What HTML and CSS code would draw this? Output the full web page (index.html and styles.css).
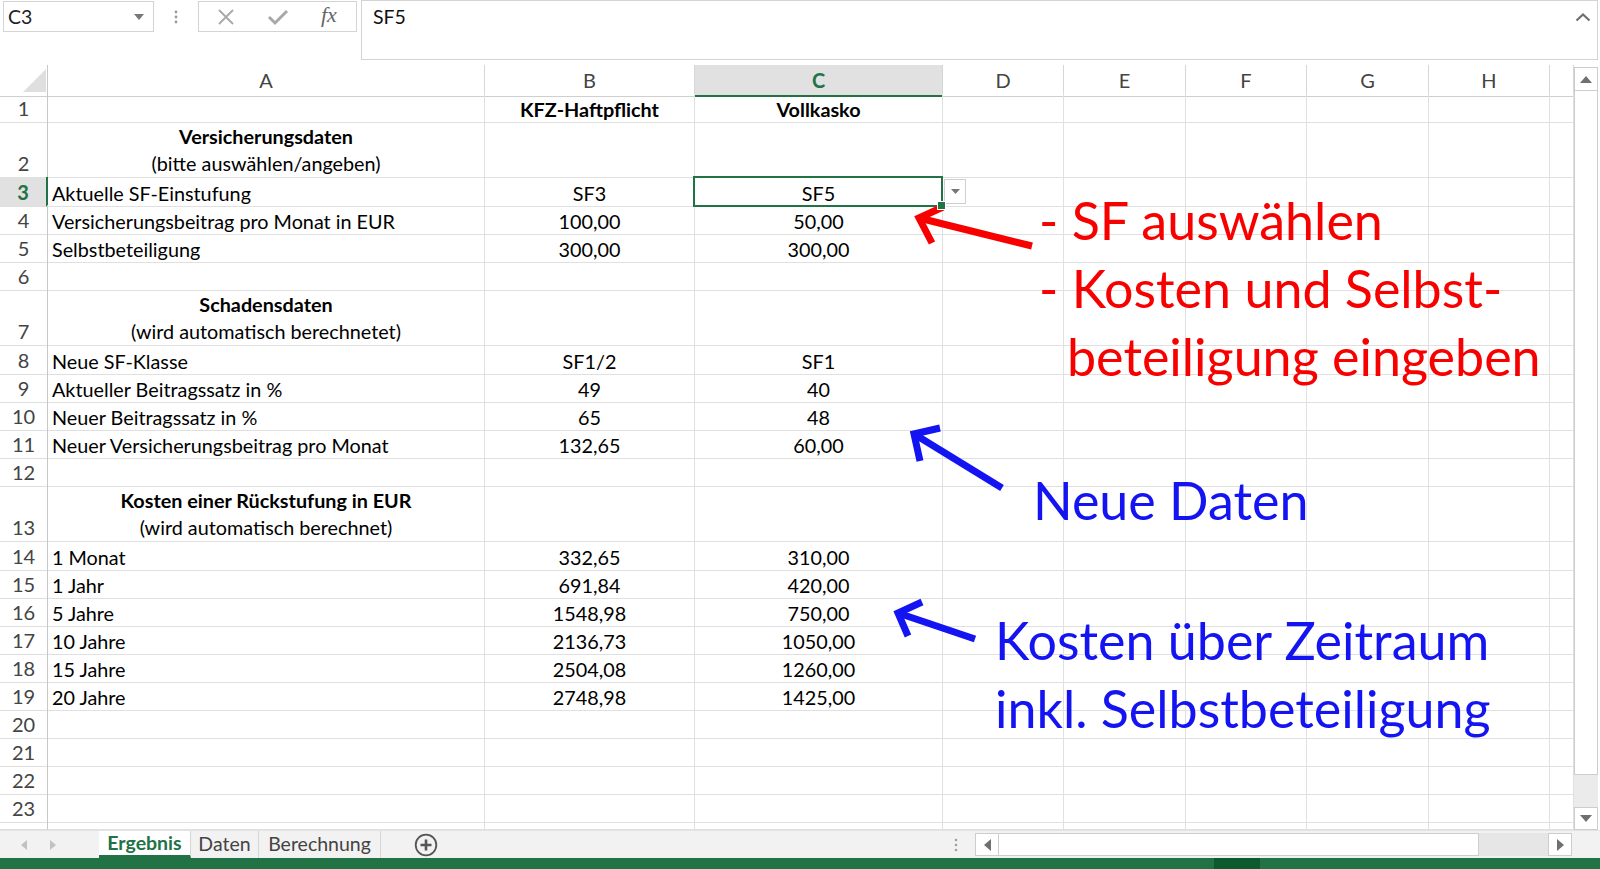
FILE: index.html
```html
<!DOCTYPE html>
<html lang="de">
<head>
<meta charset="utf-8">
<title>Ergebnis</title>
<link rel="stylesheet" href="styles.css">
</head>
<body>
<div class="app">
  <div class="formula-bar">
    <div class="namebox"><span>C3</span><svg width="10" height="6" viewBox="0 0 10 6"><polygon points="0,0 10,0 5,6" fill="#777"/></svg></div>
    <div class="fb-grip"><svg width="4" height="14" viewBox="0 0 4 14"><circle cx="2" cy="2" r="1.4" fill="#9a9a9a"/><circle cx="2" cy="7" r="1.4" fill="#9a9a9a"/><circle cx="2" cy="12" r="1.4" fill="#9a9a9a"/></svg></div>
    <div class="fb-buttons">
      <svg class="fb-x" width="18" height="18" viewBox="0 0 18 18"><path d="M2 2 L16 16 M16 2 L2 16" stroke="#a8a8a8" stroke-width="1.8" fill="none"/></svg>
      <svg class="fb-ok" width="22" height="18" viewBox="0 0 22 18"><path d="M2 9 L8 15 L20 3" stroke="#a8a8a8" stroke-width="3" fill="none"/></svg>
      <span class="fx">fx</span>
    </div>
    <div class="fb-input"><span>SF5</span><svg width="16" height="10" viewBox="0 0 16 10"><path d="M1.5 8.5 L8 2.5 L14.5 8.5" stroke="#707070" stroke-width="2.2" fill="none"/></svg></div>
  </div>

  <div class="sheet">
    <div class="grid">
      <div class="row hdr">
        <div class="corner"><svg width="48" height="28" viewBox="0 0 48 28"><polygon points="46,4 46,27 23,27" fill="#dfdfdf"/></svg></div>
        <div class="ch">A</div><div class="ch">B</div><div class="ch sel">C</div><div class="ch">D</div><div class="ch">E</div><div class="ch">F</div><div class="ch">G</div><div class="ch">H</div><div class="ch"></div>
      </div>
      <div class="row">
        <div class="rh">1</div><div class="c"></div><div class="c tc bold">KFZ-Haftpflicht</div><div class="c tc bold">Vollkasko</div><div class="c"></div><div class="c"></div><div class="c"></div><div class="c"></div><div class="c"></div><div class="c"></div>
      </div>
      <div class="row tall">
        <div class="rh">2</div><div class="c tc wrap"><span class="bold">Versicherungsdaten</span><br>(bitte auswählen/angeben)</div><div class="c"></div><div class="c"></div><div class="c"></div><div class="c"></div><div class="c"></div><div class="c"></div><div class="c"></div><div class="c"></div>
      </div>
      <div class="row">
        <div class="rh rh-sel">3</div><div class="c">Aktuelle SF-Einstufung</div><div class="c tc">SF3</div><div class="c tc cell-active">SF5</div><div class="c dd-cell"><div class="dd-btn"><svg width="9" height="5" viewBox="0 0 9 5"><polygon points="0,0 9,0 4.5,5" fill="#777"/></svg></div></div><div class="c"></div><div class="c"></div><div class="c"></div><div class="c"></div><div class="c"></div>
      </div>
      <div class="row">
        <div class="rh">4</div><div class="c">Versicherungsbeitrag pro Monat in EUR</div><div class="c tc">100,00</div><div class="c tc">50,00</div><div class="c"></div><div class="c"></div><div class="c"></div><div class="c"></div><div class="c"></div><div class="c"></div>
      </div>
      <div class="row">
        <div class="rh">5</div><div class="c">Selbstbeteiligung</div><div class="c tc">300,00</div><div class="c tc">300,00</div><div class="c"></div><div class="c"></div><div class="c"></div><div class="c"></div><div class="c"></div><div class="c"></div>
      </div>
      <div class="row">
        <div class="rh">6</div><div class="c"></div><div class="c"></div><div class="c"></div><div class="c"></div><div class="c"></div><div class="c"></div><div class="c"></div><div class="c"></div><div class="c"></div>
      </div>
      <div class="row tall">
        <div class="rh">7</div><div class="c tc wrap"><span class="bold">Schadensdaten</span><br>(wird automatisch berechnetet)</div><div class="c"></div><div class="c"></div><div class="c"></div><div class="c"></div><div class="c"></div><div class="c"></div><div class="c"></div><div class="c"></div>
      </div>
      <div class="row">
        <div class="rh">8</div><div class="c">Neue SF-Klasse</div><div class="c tc">SF1/2</div><div class="c tc">SF1</div><div class="c"></div><div class="c"></div><div class="c"></div><div class="c"></div><div class="c"></div><div class="c"></div>
      </div>
      <div class="row">
        <div class="rh">9</div><div class="c">Aktueller Beitragssatz in %</div><div class="c tc">49</div><div class="c tc">40</div><div class="c"></div><div class="c"></div><div class="c"></div><div class="c"></div><div class="c"></div><div class="c"></div>
      </div>
      <div class="row">
        <div class="rh">10</div><div class="c">Neuer Beitragssatz in %</div><div class="c tc">65</div><div class="c tc">48</div><div class="c"></div><div class="c"></div><div class="c"></div><div class="c"></div><div class="c"></div><div class="c"></div>
      </div>
      <div class="row">
        <div class="rh">11</div><div class="c">Neuer Versicherungsbeitrag pro Monat</div><div class="c tc">132,65</div><div class="c tc">60,00</div><div class="c"></div><div class="c"></div><div class="c"></div><div class="c"></div><div class="c"></div><div class="c"></div>
      </div>
      <div class="row">
        <div class="rh">12</div><div class="c"></div><div class="c"></div><div class="c"></div><div class="c"></div><div class="c"></div><div class="c"></div><div class="c"></div><div class="c"></div><div class="c"></div>
      </div>
      <div class="row tall">
        <div class="rh">13</div><div class="c tc wrap"><span class="bold">Kosten einer Rückstufung in EUR</span><br>(wird automatisch berechnet)</div><div class="c"></div><div class="c"></div><div class="c"></div><div class="c"></div><div class="c"></div><div class="c"></div><div class="c"></div><div class="c"></div>
      </div>
      <div class="row">
        <div class="rh">14</div><div class="c">1 Monat</div><div class="c tc">332,65</div><div class="c tc">310,00</div><div class="c"></div><div class="c"></div><div class="c"></div><div class="c"></div><div class="c"></div><div class="c"></div>
      </div>
      <div class="row">
        <div class="rh">15</div><div class="c">1 Jahr</div><div class="c tc">691,84</div><div class="c tc">420,00</div><div class="c"></div><div class="c"></div><div class="c"></div><div class="c"></div><div class="c"></div><div class="c"></div>
      </div>
      <div class="row">
        <div class="rh">16</div><div class="c">5 Jahre</div><div class="c tc">1548,98</div><div class="c tc">750,00</div><div class="c"></div><div class="c"></div><div class="c"></div><div class="c"></div><div class="c"></div><div class="c"></div>
      </div>
      <div class="row">
        <div class="rh">17</div><div class="c">10 Jahre</div><div class="c tc">2136,73</div><div class="c tc">1050,00</div><div class="c"></div><div class="c"></div><div class="c"></div><div class="c"></div><div class="c"></div><div class="c"></div>
      </div>
      <div class="row">
        <div class="rh">18</div><div class="c">15 Jahre</div><div class="c tc">2504,08</div><div class="c tc">1260,00</div><div class="c"></div><div class="c"></div><div class="c"></div><div class="c"></div><div class="c"></div><div class="c"></div>
      </div>
      <div class="row">
        <div class="rh">19</div><div class="c">20 Jahre</div><div class="c tc">2748,98</div><div class="c tc">1425,00</div><div class="c"></div><div class="c"></div><div class="c"></div><div class="c"></div><div class="c"></div><div class="c"></div>
      </div>
      <div class="row">
        <div class="rh">20</div><div class="c"></div><div class="c"></div><div class="c"></div><div class="c"></div><div class="c"></div><div class="c"></div><div class="c"></div><div class="c"></div><div class="c"></div>
      </div>
      <div class="row">
        <div class="rh">21</div><div class="c"></div><div class="c"></div><div class="c"></div><div class="c"></div><div class="c"></div><div class="c"></div><div class="c"></div><div class="c"></div><div class="c"></div>
      </div>
      <div class="row">
        <div class="rh">22</div><div class="c"></div><div class="c"></div><div class="c"></div><div class="c"></div><div class="c"></div><div class="c"></div><div class="c"></div><div class="c"></div><div class="c"></div>
      </div>
      <div class="row">
        <div class="rh">23</div><div class="c"></div><div class="c"></div><div class="c"></div><div class="c"></div><div class="c"></div><div class="c"></div><div class="c"></div><div class="c"></div><div class="c"></div>
      </div>
      <div class="row part">
        <div class="rh"></div><div class="c"></div><div class="c"></div><div class="c"></div><div class="c"></div><div class="c"></div><div class="c"></div><div class="c"></div><div class="c"></div><div class="c"></div>
      </div>
    </div>
    <div class="vscroll">
      <div class="vs-btn up"><svg width="12" height="7" viewBox="0 0 12 7"><polygon points="0,7 12,7 6,0" fill="#6f6f6f"/></svg></div>
      <div class="vs-thumb"></div>
      <div class="vs-track"></div>
      <div class="vs-btn down"><svg width="12" height="7" viewBox="0 0 12 7"><polygon points="0,0 12,0 6,7" fill="#6f6f6f"/></svg></div>
    </div>
  </div>

  <div class="tabbar">
    <div class="tab-nav">
      <svg width="6" height="10" viewBox="0 0 6 10"><polygon points="6,0 6,10 0,5" fill="#c2c2c2"/></svg>
      <svg width="6" height="10" viewBox="0 0 6 10"><polygon points="0,0 0,10 6,5" fill="#c2c2c2"/></svg>
    </div>
    <div class="tab tab-current">Ergebnis</div>
    <div class="tab tab-daten">Daten</div>
    <div class="tab tab-calc">Berechnung</div>
    <div class="tab-add"><svg width="24" height="24" viewBox="0 0 24 24"><circle cx="12" cy="12" r="10.3" stroke="#555" stroke-width="1.8" fill="none"/><path d="M12 6.5 V17.5 M6.5 12 H17.5" stroke="#555" stroke-width="2.6"/></svg></div>
    <div class="tab-space"></div>
    <div class="hs-grip"><svg width="4" height="14" viewBox="0 0 4 14"><circle cx="2" cy="2" r="1.3" fill="#a0a0a0"/><circle cx="2" cy="7" r="1.3" fill="#a0a0a0"/><circle cx="2" cy="12" r="1.3" fill="#a0a0a0"/></svg></div>
    <div class="hscroll">
      <div class="hs-btn"><svg width="7" height="12" viewBox="0 0 7 12"><polygon points="7,0 7,12 0,6" fill="#6f6f6f"/></svg></div>
      <div class="hs-thumb"></div>
      <div class="hs-track"></div>
      <div class="hs-btn"><svg width="7" height="12" viewBox="0 0 7 12"><polygon points="0,0 0,12 7,6" fill="#6f6f6f"/></svg></div>
    </div>
  </div>

  <div class="statusbar"><div class="sb-mark"></div></div>

  <div class="annot">
    <svg class="arrows" width="1600" height="869" viewBox="0 0 1600 869">
      <g stroke="#f80000" stroke-width="7" fill="none" stroke-linejoin="miter">
        <path d="M1032 246 L919 218"/>
        <path d="M943 207 L919 218 L932 243"/>
      </g>
      <g stroke="#1414f2" stroke-width="7" fill="none" stroke-linejoin="miter">
        <path d="M1002 488 L914 434"/>
        <path d="M940 428 L914 434 L920 461"/>
        <path d="M975 639 L898 613"/>
        <path d="M922 602 L898 613 L908 636"/>
      </g>
    </svg>
    <div class="note red n1">
      <div>- SF auswählen</div>
      <div>- Kosten und Selbst-</div>
      <div class="indent">beteiligung eingeben</div>
    </div>
    <div class="note blue n2"><div>Neue Daten</div></div>
    <div class="note blue n3">
      <div>Kosten über Zeitraum</div>
      <div>inkl. Selbstbeteiligung</div>
    </div>
  </div>
</div>
</body>
</html>
```

FILE: styles.css
```css
* { box-sizing: border-box; }
html, body { margin: 0; padding: 0; }
body {
  width: 1600px;
  height: 869px;
  overflow: hidden;
  background: #fff;
  font-family: Lato, "Open Sans", sans-serif;
  color: #000;
}
.app {
  position: relative;
  display: flex;
  flex-direction: column;
  width: 1600px;
  height: 869px;
}

/* formula bar */
.formula-bar {
  flex: none;
  height: 65px;
  display: flex;
  align-items: flex-start;
}
.namebox {
  margin: 1px 0 0 3px;
  width: 151px;
  height: 31px;
  border: 1px solid #d4d4d4;
  display: flex;
  align-items: center;
  justify-content: space-between;
  padding: 0 9px 0 4px;
  font-size: 19.5px;
  color: #222;
}
.fb-grip {
  width: 44px;
  height: 31px;
  margin-top: 1px;
  display: flex;
  align-items: center;
  justify-content: center;
}
.fb-buttons {
  margin-top: 1px;
  width: 159px;
  height: 31px;
  border: 1px solid #d4d4d4;
  display: flex;
  align-items: center;
  padding-left: 18px;
}
.fb-x { margin-right: 32px; }
.fb-ok { margin-right: 32px; }
.fx {
  font-family: "Liberation Serif", serif;
  font-style: italic;
  font-size: 22px;
  color: #666;
  line-height: 1;
  margin-top: -3px;
}
.fb-input {
  margin-left: 4px;
  width: 1237px;
  height: 60px;
  border: 1px solid #d4d4d4;
  display: flex;
  align-items: flex-start;
  justify-content: space-between;
  padding: 5px 6px 0 11px;
  font-size: 19.5px;
  color: #111;
  line-height: 22px;
}
.fb-input svg { margin-top: 6px; }

/* sheet */
.sheet {
  flex: none;
  height: 765px;
  display: flex;
}
.grid {
  width: 1574px;
  overflow: hidden;
}
.row {
  display: grid;
  grid-template-columns: 48px 437px 210px 248px 121px 122px 121px 122px 121px 24px;
  height: 28px;
}
.row.tall { height: 56px; }
.row.part { height: 9px; }

.corner, .ch {
  border-right: 1px solid #d6d6d6;
  border-bottom: 1px solid #cfcfcf;
}
.corner { border-right-color: #c8c8c8; }
.ch {
  text-align: center;
  font-size: 20px;
  color: #444;
  line-height: 28px;
  padding-top: 1px;
}
.ch.sel {
  background: #e1e1e1;
  color: #217346;
  font-weight: 700;
  border-bottom: 2px solid #217346;
}
.rh {
  border-right: 1px solid #c8c8c8;
  border-bottom: 1px solid #dedede;
  text-align: center;
  font-size: 20px;
  color: #444;
  line-height: 27px;
  padding-top: 2px;
}
.row.tall .rh { padding-top: 29px; }
.rh-sel {
  background: #e1e1e1;
  color: #217346;
  font-weight: 700;
  border-right: 2px solid #217346;
}
.c {
  border-right: 1px solid #e0e0e0;
  border-bottom: 1px solid #e0e0e0;
  font-size: 19.8px;
  line-height: 26px;
  padding: 3px 4px 0 4px;
  white-space: nowrap;
  overflow: hidden;
}
.tc { text-align: center; }
.bold { font-weight: 700; }
.c.wrap {
  line-height: 27px;
  padding-top: 2px;
}
.cell-active {
  position: relative;
  overflow: visible;
}
.cell-active::after {
  content: "";
  position: absolute;
  left: -2px;
  top: -1px;
  right: -1px;
  bottom: -1px;
  border: 2px solid #217346;
}
.cell-active::before {
  content: "";
  position: absolute;
  right: -4px;
  bottom: -4px;
  width: 7px;
  height: 7px;
  background: #217346;
  border: 1px solid #fff;
  z-index: 2;
}
.dd-cell { padding: 2px 0 0 1px; }
.dd-btn {
  width: 22px;
  height: 25px;
  border: 1px solid #cfcfcf;
  background: #fff;
  display: flex;
  align-items: center;
  justify-content: center;
}

/* vertical scrollbar */
.vscroll {
  width: 26px;
  padding: 2px 2px 0 0;
  display: flex;
  flex-direction: column;
  background: #fff;
}
.vs-btn {
  flex: none;
  border: 1px solid #cdcdcd;
  background: #fff;
  display: flex;
  align-items: center;
  justify-content: center;
}
.vs-btn.up { height: 24px; }
.vs-btn.down { height: 23px; }
.vs-thumb {
  flex: 1;
  border: 1px solid #cdcdcd;
  border-top: none;
  background: #fff;
}
.vs-track {
  flex: none;
  height: 32px;
  background: #ebebeb;
}

/* tab bar */
.tabbar {
  flex: none;
  height: 28px;
  display: flex;
  background: #f2f2f2;
  border-top: 1px solid #e3e3e3;
}
.tab-nav {
  width: 99px;
  display: flex;
  align-items: center;
  padding-left: 21px;
  gap: 23px;
}
.tab {
  font-size: 19.5px;
  color: #444;
  line-height: 26px;
  text-align: center;
  border-right: 1px solid #d6d6d6;
}
.tab-current {
  background: #fff;
  color: #217346;
  font-weight: 700;
  width: 92px;
  border-bottom: 3px solid #217346;
  line-height: 24px;
}
.tab-daten { width: 68px; }
.tab-calc { width: 122px; }
.tab-add {
  margin-left: 33px;
  display: flex;
  align-items: center;
}
.tab-space { flex: 1; }
.hs-grip {
  width: 16px;
  display: flex;
  align-items: center;
  justify-content: center;
  margin-right: 11px;
}
.hscroll {
  width: 597px;
  height: 23px;
  margin: 2px 28px 0 0;
  display: flex;
}
.hs-btn {
  width: 24px;
  border: 1px solid #cdcdcd;
  background: #fff;
  display: flex;
  align-items: center;
  justify-content: center;
}
.hs-thumb {
  width: 480px;
  border: 1px solid #cdcdcd;
  border-left: none;
  background: #fff;
}
.hs-track {
  flex: 1;
  background: #e6e6e6;
}

/* status bar */
.statusbar {
  flex: none;
  height: 11px;
  background: #217346;
  padding-left: 1214px;
}
.sb-mark {
  width: 46px;
  height: 100%;
  background: #0d5a2e;
}

/* annotations */
.annot {
  position: absolute;
  left: 0;
  top: 0;
  width: 1600px;
  height: 869px;
  pointer-events: none;
}
.arrows {
  position: absolute;
  left: 0;
  top: 0;
}
.note {
  position: absolute;
  font-size: 52px;
  line-height: 68px;
  white-space: nowrap;
}
.note.red { color: #f80000; }
.note.blue { color: #1414f2; }
.note .indent { padding-left: 28px; }
.n1 { left: 1039px; top: 186px; }
.n2 { left: 1033px; top: 466px; }
.n3 { left: 995px; top: 606px; }
```
